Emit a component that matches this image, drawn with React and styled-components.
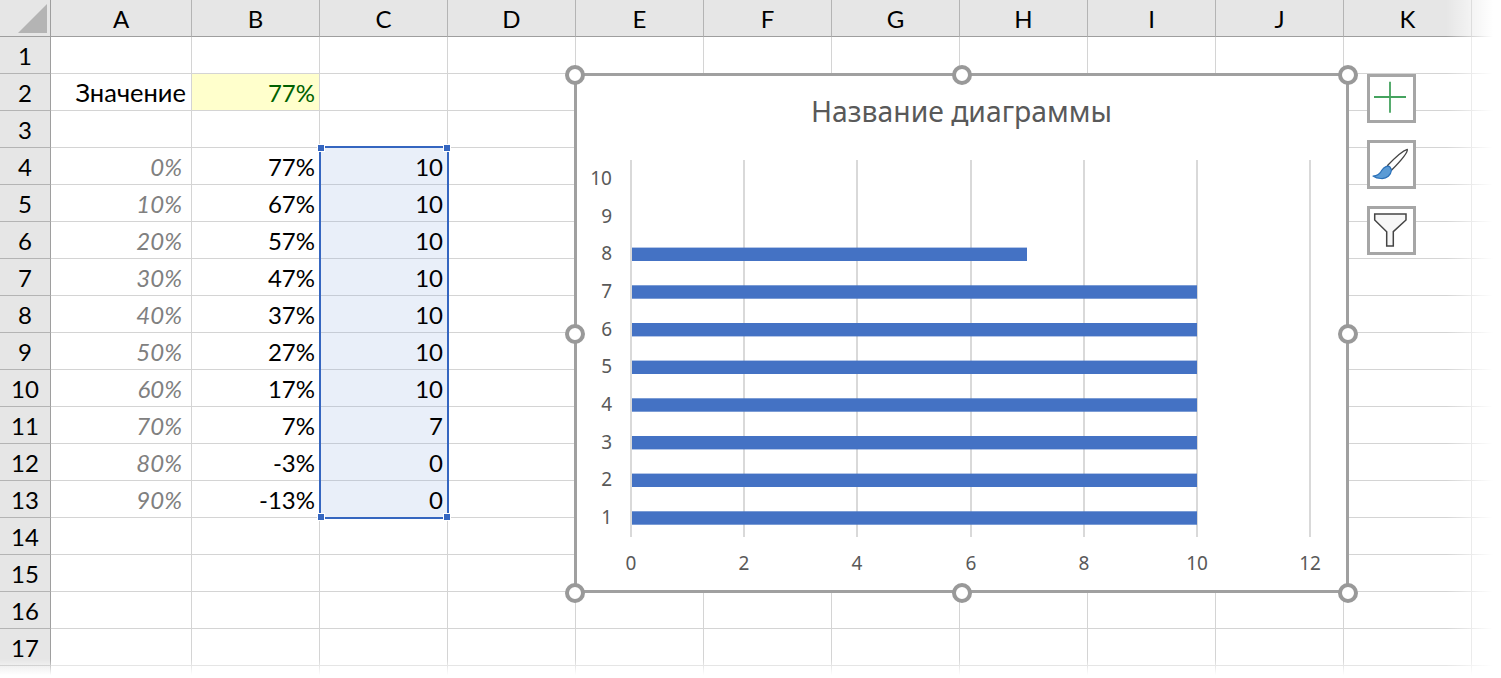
import React from 'react';
import styled, { createGlobalStyle, css } from 'styled-components';

const Global = createGlobalStyle`
  html, body { margin: 0; padding: 0; background: #fff; overflow: hidden; }
  * { box-sizing: border-box; }
`;

const FONT = `"Lato", "Noto Sans", "Open Sans", sans-serif`;
const CHART_FONT = `"Noto Sans", "Open Sans", sans-serif`;

const sheetTracks = css`
  display: grid;
  grid-template-columns: 51px 141px repeat(10, 128px) 40px;
  grid-template-rows: 37px repeat(18, 37px);
`;

const Sheet = styled.div`
  position: relative;
  width: 1501px;
  height: 678px;
  overflow: hidden;
  font-family: ${FONT};
  font-size: 24px;
  color: #000;
`;

const Cells = styled.div`
  ${sheetTracks}
`;

const Overlays = styled.div`
  ${sheetTracks}
  position: absolute;
  inset: 0;
`;

const Corner = styled.div`
  background: #e6e6e6;
  border-right: 1px solid #9e9e9e;
  border-bottom: 1px solid #9e9e9e;
  padding: 4px 0 0 18px;
  &::after {
    content: '';
    display: block;
    width: 0;
    height: 0;
    border-style: solid;
    border-width: 0 0 29px 29px;
    border-color: transparent transparent #b4b4b4 transparent;
  }
`;

const ColHead = styled.div`
  background: #e6e6e6;
  border-right: 1px solid #b4b4b4;
  border-bottom: 1px solid #9e9e9e;
  display: flex;
  align-items: center;
  justify-content: center;
`;

const RowHead = styled.div`
  background: #e6e6e6;
  border-right: 1px solid #9e9e9e;
  border-bottom: 1px solid #b4b4b4;
  display: flex;
  align-items: center;
  justify-content: center;
`;

const Cell = styled.div`
  border-right: 1px solid ${p => (p.$selected ? '#c6ccd6' : '#d4d4d4')};
  border-bottom: 1px solid ${p => (p.$selected ? '#c6ccd6' : '#d4d4d4')};
  background: ${p => (p.$selected ? '#e9eff9' : p.$input ? '#ffffcc' : '#fff')};
  color: ${p => (p.$input ? '#006100' : p.$muted ? '#808080' : '#000')};
  font-style: ${p => (p.$muted ? 'italic' : 'normal')};
  font-size: ${p => (p.$label ? '25.5px' : '24px')};
  display: flex;
  align-items: center;
  justify-content: flex-end;
  padding-right: ${p => (p.$muted ? 9 : p.$label ? 5 : 4)}px;
`;

const Selection = styled.div`
  grid-column: 4;
  grid-row: 5 / 15;
  margin: -2px -1px -1px -1px;
  border: 2px solid #3566c0;
  position: relative;
`;

const GripLayer = styled.div`
  position: absolute;
  inset: -3px;
  display: grid;
  grid-template-columns: 6px 6px;
  grid-template-rows: 6px 6px;
  justify-content: space-between;
  align-content: space-between;
`;

const Grip = styled.span`
  background: #3566c0;
  outline: 1px solid #fff;
`;

const ChartFrame = styled.div`
  grid-column: 6 / 12;
  grid-row: 3 / 17;
  margin: -1px -5px -1px -2px;
  position: relative;
  border: 3px solid #a0a0a0;
  background: #fff;
  display: flex;
  flex-direction: column;
`;

const ChartTitle = styled.div`
  height: 74px;
  padding-top: 16px;
  text-align: center;
  font-family: ${CHART_FONT};
  font-size: 28.3px;
  line-height: 38px;
  color: #595959;
`;

const Plot = styled.svg`
  display: block;
  width: 769px;
  height: 440px;
  text {
    font-family: ${CHART_FONT};
    font-size: 19px;
    fill: #595959;
  }
`;

const HandleLayer = styled.div`
  position: absolute;
  inset: -11px -12px -13px -12px;
  display: grid;
  grid-template-columns: repeat(3, 20px);
  grid-template-rows: repeat(3, 20px);
  justify-content: space-between;
  align-content: space-between;
`;

const Handle = styled.span`
  border-radius: 50%;
  border: 4px solid #999;
  background: #fff;
  visibility: ${p => (p.$hidden ? 'hidden' : 'visible')};
`;

const Tools = styled.div`
  grid-column: 12;
  grid-row: 3 / 9;
  margin-left: 23px;
  display: flex;
  flex-direction: column;
  gap: 17px;
`;

const ToolButton = styled.div`
  width: 49px;
  height: 49px;
  border: 3px solid #a6a6a6;
  background: #fff;
  svg { display: block; width: 43px; height: 43px; }
`;

const FadeRight = styled.div`
  position: absolute;
  top: 0;
  bottom: 0;
  right: 0;
  width: 55px;
  background: linear-gradient(to right, rgba(255,255,255,0), #fff 85%);
  pointer-events: none;
`;

const FadeBottom = styled.div`
  position: absolute;
  left: 0;
  right: 0;
  bottom: 0;
  height: 19px;
  background: linear-gradient(to bottom, rgba(255,255,255,0), #fff 85%);
  pointer-events: none;
`;

const COLS = ['A','B','C','D','E','F','G','H','I','J','K',''];
const pct = ['0%','10%','20%','30%','40%','50%','60%','70%','80%','90%'];
const rem = ['77%','67%','57%','47%','37%','27%','17%','7%','-3%','-13%'];
const val = ['10','10','10','10','10','10','10','7','0','0'];

function cellFor(row, col) {
  if (row === 2 && col === 0) return { text: 'Значение', label: true };
  if (row === 2 && col === 1) return { text: '77%', input: true };
  if (row >= 4 && row <= 13) {
    const i = row - 4;
    if (col === 0) return { text: pct[i], muted: true };
    if (col === 1) return { text: rem[i] };
    if (col === 2) return { text: val[i], selected: true };
  }
  return {};
}

const gridX = [631, 744, 857, 971, 1084, 1197, 1310];
const xLabels = [0, 2, 4, 6, 8, 10, 12];
const catY = [518, 480.3, 442.7, 405, 367.3, 329.7, 292, 254.3, 216.7, 179];
const barEnd = [1197, 1197, 1197, 1197, 1197, 1197, 1197, 1027];

export default function App() {
  return (
    <>
      <Global />
      <Sheet>
        <Cells>
          <Corner />
          {COLS.map((c, i) => <ColHead key={i}>{c}</ColHead>)}
          {Array.from({ length: 18 }, (_, r) => r + 1).map(row => (
            <React.Fragment key={row}>
              <RowHead>{row < 18 ? row : ''}</RowHead>
              {COLS.map((_, col) => {
                const c = cellFor(row, col);
                return (
                  <Cell key={col} $selected={c.selected} $input={c.input} $muted={c.muted} $label={c.label}>
                    {c.text}
                  </Cell>
                );
              })}
            </React.Fragment>
          ))}
        </Cells>

        <Overlays>
          <Selection>
            <GripLayer>
              <Grip /><Grip /><Grip /><Grip />
            </GripLayer>
          </Selection>

          <ChartFrame>
            <ChartTitle>Название диаграммы</ChartTitle>
            <Plot viewBox="577 150 769 440">
              {gridX.map(x => (
                <line key={x} x1={x} x2={x} y1={160} y2={537} stroke="#d9d9d9" strokeWidth="2" />
              ))}
              {barEnd.map((end, i) => (
                <rect key={i} x={632} y={catY[i] - 6.7} width={end - 632} height={13.4} fill="#4472c4" />
              ))}
              {catY.map((y, i) => (
                <text key={i} x={612} y={y + 6} textAnchor="end">{i + 1}</text>
              ))}
              {gridX.map((x, i) => (
                <text key={x} x={x} y={570} textAnchor="middle">{xLabels[i]}</text>
              ))}
            </Plot>
            <HandleLayer>
              <Handle /><Handle /><Handle />
              <Handle /><Handle $hidden /><Handle />
              <Handle /><Handle /><Handle />
            </HandleLayer>
          </ChartFrame>

          <Tools>
            <ToolButton>
              <svg viewBox="0 0 43 43">
                <path d="M4 20H36M20 4.7V35.7" stroke="#45a35f" strokeWidth="1.8" fill="none" />
              </svg>
            </ToolButton>
            <ToolButton>
              <svg viewBox="0 0 43 43">
                <path d="M37.3 6.3C38 9 33 15.5 21.7 27L17.5 22.5C26 13.5 33.5 7.5 37.3 6.3Z" fill="#fff" stroke="#444" strokeWidth="1.3" strokeLinejoin="round" />
                <path d="M3 33C7 33 10 31 12 27C14 24 18 22 20 24L21.5 27C21 32 17 36 11 35.5C8 35.5 5 34.5 3 33Z" fill="#5b9bd5" stroke="#2a70b8" strokeWidth="1.2" strokeLinejoin="round" />
              </svg>
            </ToolButton>
            <ToolButton>
              <svg viewBox="0 0 43 43">
                <path d="M4.7 5H36V11L23.3 22.7V37H16.7V22.7L4.7 11Z" fill="#f7f7f7" stroke="#444" strokeWidth="1.5" strokeLinejoin="miter" />
              </svg>
            </ToolButton>
          </Tools>
        </Overlays>

        <FadeRight />
        <FadeBottom />
      </Sheet>
    </>
  );
}
